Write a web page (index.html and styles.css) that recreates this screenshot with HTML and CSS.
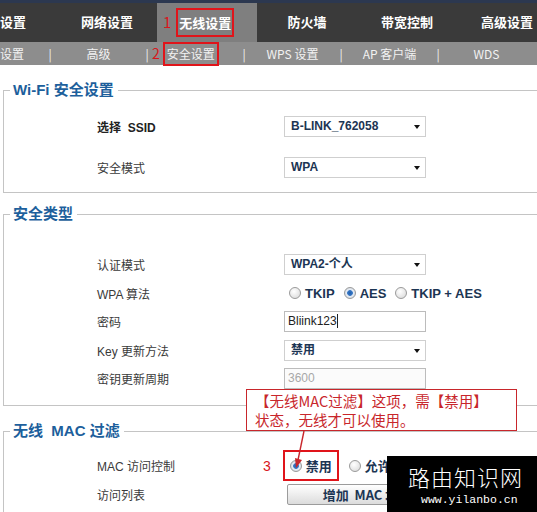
FILE: index.html
```html
<html>
    <head>
        <title>无线安全设置</title>
        <link rel="stylesheet" href="styles.css">
    </head>

    <body>
        <div class="topnav">
            <div class="nav-item first">设置</div>
            <div class="nav-item">网络设置</div>
            <div class="nav-item active"><span class="step">1</span><span class="mark">无线设置</span></div>
            <div class="nav-item">防火墙</div>
            <div class="nav-item">带宽控制</div>
            <div class="nav-item">高级设置</div>
        </div>
        <div class="subnav">
            <div class="sub-item first">设置</div>
            <div class="sep">|</div>
            <div class="sub-item">高级</div>
            <div class="sep">|</div>
            <div class="sub-item current"><span class="step">2</span><span class="mark">安全设置</span></div>
            <div class="sep">|</div>
            <div class="sub-item">WPS 设置</div>
            <div class="sep">|</div>
            <div class="sub-item">AP 客户端</div>
            <div class="sep">|</div>
            <div class="sub-item">WDS</div>
        </div>

        <div class="main">
            <fieldset class="box box-wifi">
                <legend>Wi-Fi 安全设置</legend>
                <div class="rows rows-wide">
                    <div class="label strong">选择&nbsp; SSID</div>
                    <div class="select">B-LINK_762058</div>
                    <div class="label">安全模式</div>
                    <div class="select">WPA</div>
                </div>
            </fieldset>

            <fieldset class="box box-type">
                <legend>安全类型</legend>
                <div class="rows">
                    <div class="label">认证模式</div>
                    <div class="select">WPA2-个人</div>
                    <div class="label">WPA 算法</div>
                    <div class="radios">
                        <span class="radio"></span><span class="opt">TKIP</span>
                        <span class="radio on"></span><span class="opt">AES</span>
                        <span class="radio"></span><span class="opt">TKIP + AES</span>
                    </div>
                    <div class="label">密码</div>
                    <div class="input">Bliink123<span class="caret"></span></div>
                    <div class="label">Key 更新方法</div>
                    <div class="select">禁用</div>
                    <div class="label">密钥更新周期</div>
                    <div class="input disabled">3600</div>
                </div>
            </fieldset>

            <fieldset class="box box-mac">
                <legend>无线&nbsp; MAC 过滤</legend>
                <div class="rows">
                    <div class="label">MAC 访问控制</div>
                    <div class="radios">
                        <span class="step num">3</span>
                        <span class="mark mark-radio"><span class="radio on"></span><span class="opt">禁用</span></span>
                        <span class="radio"></span><span class="opt">允许</span>
                    </div>
                    <div class="label">访问列表</div>
                    <div><button class="btn">增加&nbsp; MAC 地址</button></div>
                </div>
            </fieldset>
        </div>

        <div class="note">
            <div class="note-line">【无线MAC过滤】这项，需【禁用】</div>
            <div class="note-line">状态，无线才可以使用。</div>
        </div>
        <svg class="arrow" width="30" height="40" viewBox="0 0 30 40">
            <line x1="18" y1="1" x2="12" y2="30" stroke="#c8262b" stroke-width="1.4"/>
            <polygon points="9,28 16,30 10,38" fill="#c8262b"/>
        </svg>

        <div class="watermark">
            <div class="wm-title">路由知识网</div>
            <div class="wm-url">www.yilanbo.cn</div>
        </div>
    </body>
</html>
```

FILE: styles.css
```css
html, body {
    margin: 0;
    overflow: hidden;
}

body {
    position: relative;
    width: 537px;
    height: 512px;
    background: #fff;
    font-family: "Liberation Sans", "Noto Sans CJK SC", sans-serif;
    color: #333;
}

.topnav {
    display: flex;
    height: 39px;
    border-top: 3px solid #2c3850;
    background: #3a3a3a;
}

.nav-item {
    width: 100px;
    flex: none;
    text-align: center;
    line-height: 37px;
    font-family: "Noto Sans CJK SC", sans-serif;
    font-size: 13px;
    font-weight: bold;
    color: #fff;
}

.nav-item.first {
    width: 57px;
    text-align: left;
}

.nav-item.active {
    background: #7f7f7f;
    text-align: left;
    padding-left: 6px;
    width: 94px;
}

.step {
    color: #d8161b;
    font-weight: normal;
    font-size: 15px;
    margin-right: 5px;
}

.mark {
    border: 2px solid #e0141a;
    padding: 1px 1px;
}

.nav-item .mark {
    padding: 3px 1px;
}

.subnav {
    display: flex;
    height: 23px;
    background: #8d8d8d;
    font-family: "Noto Sans CJK SC", sans-serif;
    font-size: 12px;
    line-height: 23px;
    color: #f2f2f2;
}

.sub-item {
    width: 91px;
    flex: none;
    text-align: center;
}

.sub-item.first {
    width: 47px;
    text-align: left;
}

.sub-item.current {
    text-align: left;
    padding-left: 2px;
    width: 89px;
}

.sub-item .step {
    font-size: 14px;
    margin-right: 3px;
}

.sub-item .mark {
    padding: 1px 2px 2px;
}

.sep {
    width: 6px;
    flex: none;
    text-align: center;
}

.main {
    padding-top: 16px;
}

.box {
    margin: 0 -20px 0 3px;
    padding: 0 0 0 6px;
    border: 1px solid #c4c4c4;
}

.box legend {
    padding: 0 4px 0 3px;
    font-family: "Liberation Sans", "Noto Sans CJK SC", sans-serif;
    font-size: 15px;
    line-height: 18px;
    font-weight: bold;
    color: #1d5f9c;
}

.box-wifi {
    padding-top: 17px;
    padding-bottom: 14px;
}

.box-type {
    margin-top: 12px;
    padding-top: 31px;
    padding-bottom: 16px;
}

.box-mac {
    margin-top: 16px;
    padding-top: 15px;
    padding-bottom: 20px;
}

.rows {
    display: grid;
    grid-template-columns: 187px 142px;
    grid-auto-rows: 21px;
    row-gap: 7.5px;
    margin-left: 87px;
    align-items: center;
}

.rows-wide {
    row-gap: 20px;
}

.label {
    font-size: 12px;
    font-family: "Liberation Sans", "Noto Sans CJK SC", sans-serif;
    color: #3a3a3a;
}

.label.strong {
    font-weight: bold;
    color: #222;
}

.select, .input {
    position: relative;
    box-sizing: border-box;
    height: 21px;
    border: 1px solid #cfcfcf;
    background: #fff;
    padding-left: 6px;
    line-height: 19px;
    font-size: 12px;
    font-weight: bold;
    color: #1c3553;
}

.select::after {
    content: "";
    position: absolute;
    right: 5px;
    top: 8px;
    border-left: 3.5px solid transparent;
    border-right: 3.5px solid transparent;
    border-top: 4px solid #111;
}

.input {
    border-color: #bcbcbc;
    padding-left: 3px;
    font-weight: normal;
    color: #222;
}

.caret {
    display: inline-block;
    width: 1px;
    height: 14px;
    background: #222;
    vertical-align: -3px;
}

.input.disabled {
    color: #a8a8a8;
    background: #fbfbfb;
}

.radios {
    display: flex;
    align-items: center;
    white-space: nowrap;
    padding-left: 5px;
}

.radio {
    display: inline-block;
    box-sizing: border-box;
    width: 12px;
    height: 12px;
    border-radius: 50%;
    border: 1px solid #9a9a9a;
    background: radial-gradient(circle at 40% 35%, #fff, #d6d6d6);
    margin-right: 4px;
    flex: none;
}

.radio.on {
    background: radial-gradient(circle, #1f5fae 0, #3a78c4 2.5px, #e8eef6 3.2px, #cfd6de 6px);
}

.opt {
    font-size: 13px;
    font-weight: bold;
    color: #1c3553;
    margin-right: 9px;
}

.num {
    font-size: 14px;
    margin-left: -26px;
    margin-right: 12px;
}

.mark-radio {
    display: flex;
    align-items: center;
    padding: 4px 5px 4px 5px;
    margin-right: 10px;
}

.mark-radio .opt {
    font-family: "Noto Sans CJK SC", sans-serif;
    margin-right: 0;
}

.radios .opt {
    font-family: "Liberation Sans", "Noto Sans CJK SC", sans-serif;
}

.btn {
    height: 21px;
    width: 160px;
    margin-left: 3px;
    border: 1px solid #9c9c9c;
    border-radius: 2px;
    background: linear-gradient(#ffffff, #dcdcdc);
    font-family: "Noto Sans CJK SC", sans-serif;
    font-size: 13px;
    font-weight: bold;
    color: #1c3553;
    padding: 0;
    line-height: 19px;
}

.note {
    position: absolute;
    left: 246px;
    top: 389px;
    box-sizing: border-box;
    width: 271px;
    height: 42px;
    padding: 1px 0 0 8px;
    border: 1px solid #c8262b;
    background: #fff;
    font-family: "Noto Sans CJK SC", sans-serif;
    font-size: 14.5px;
    color: #c8262b;
}

.note-line {
    height: 19px;
    line-height: 19px;
    white-space: nowrap;
}

.arrow {
    position: absolute;
    left: 286px;
    top: 430px;
}

.watermark {
    position: absolute;
    left: 387px;
    top: 456px;
    width: 150px;
    height: 56px;
    background: #000;
    color: #fff;
}

.wm-title {
    font-family: "Noto Sans CJK SC", serif;
    font-size: 22px;
    font-weight: 300;
    line-height: 26px;
    margin: 7px 0 0 21px;
    letter-spacing: 1px;
}

.wm-url {
    font-family: "Liberation Mono", monospace;
    font-size: 11.5px;
    margin: 4px 0 0 34px;
}
```
